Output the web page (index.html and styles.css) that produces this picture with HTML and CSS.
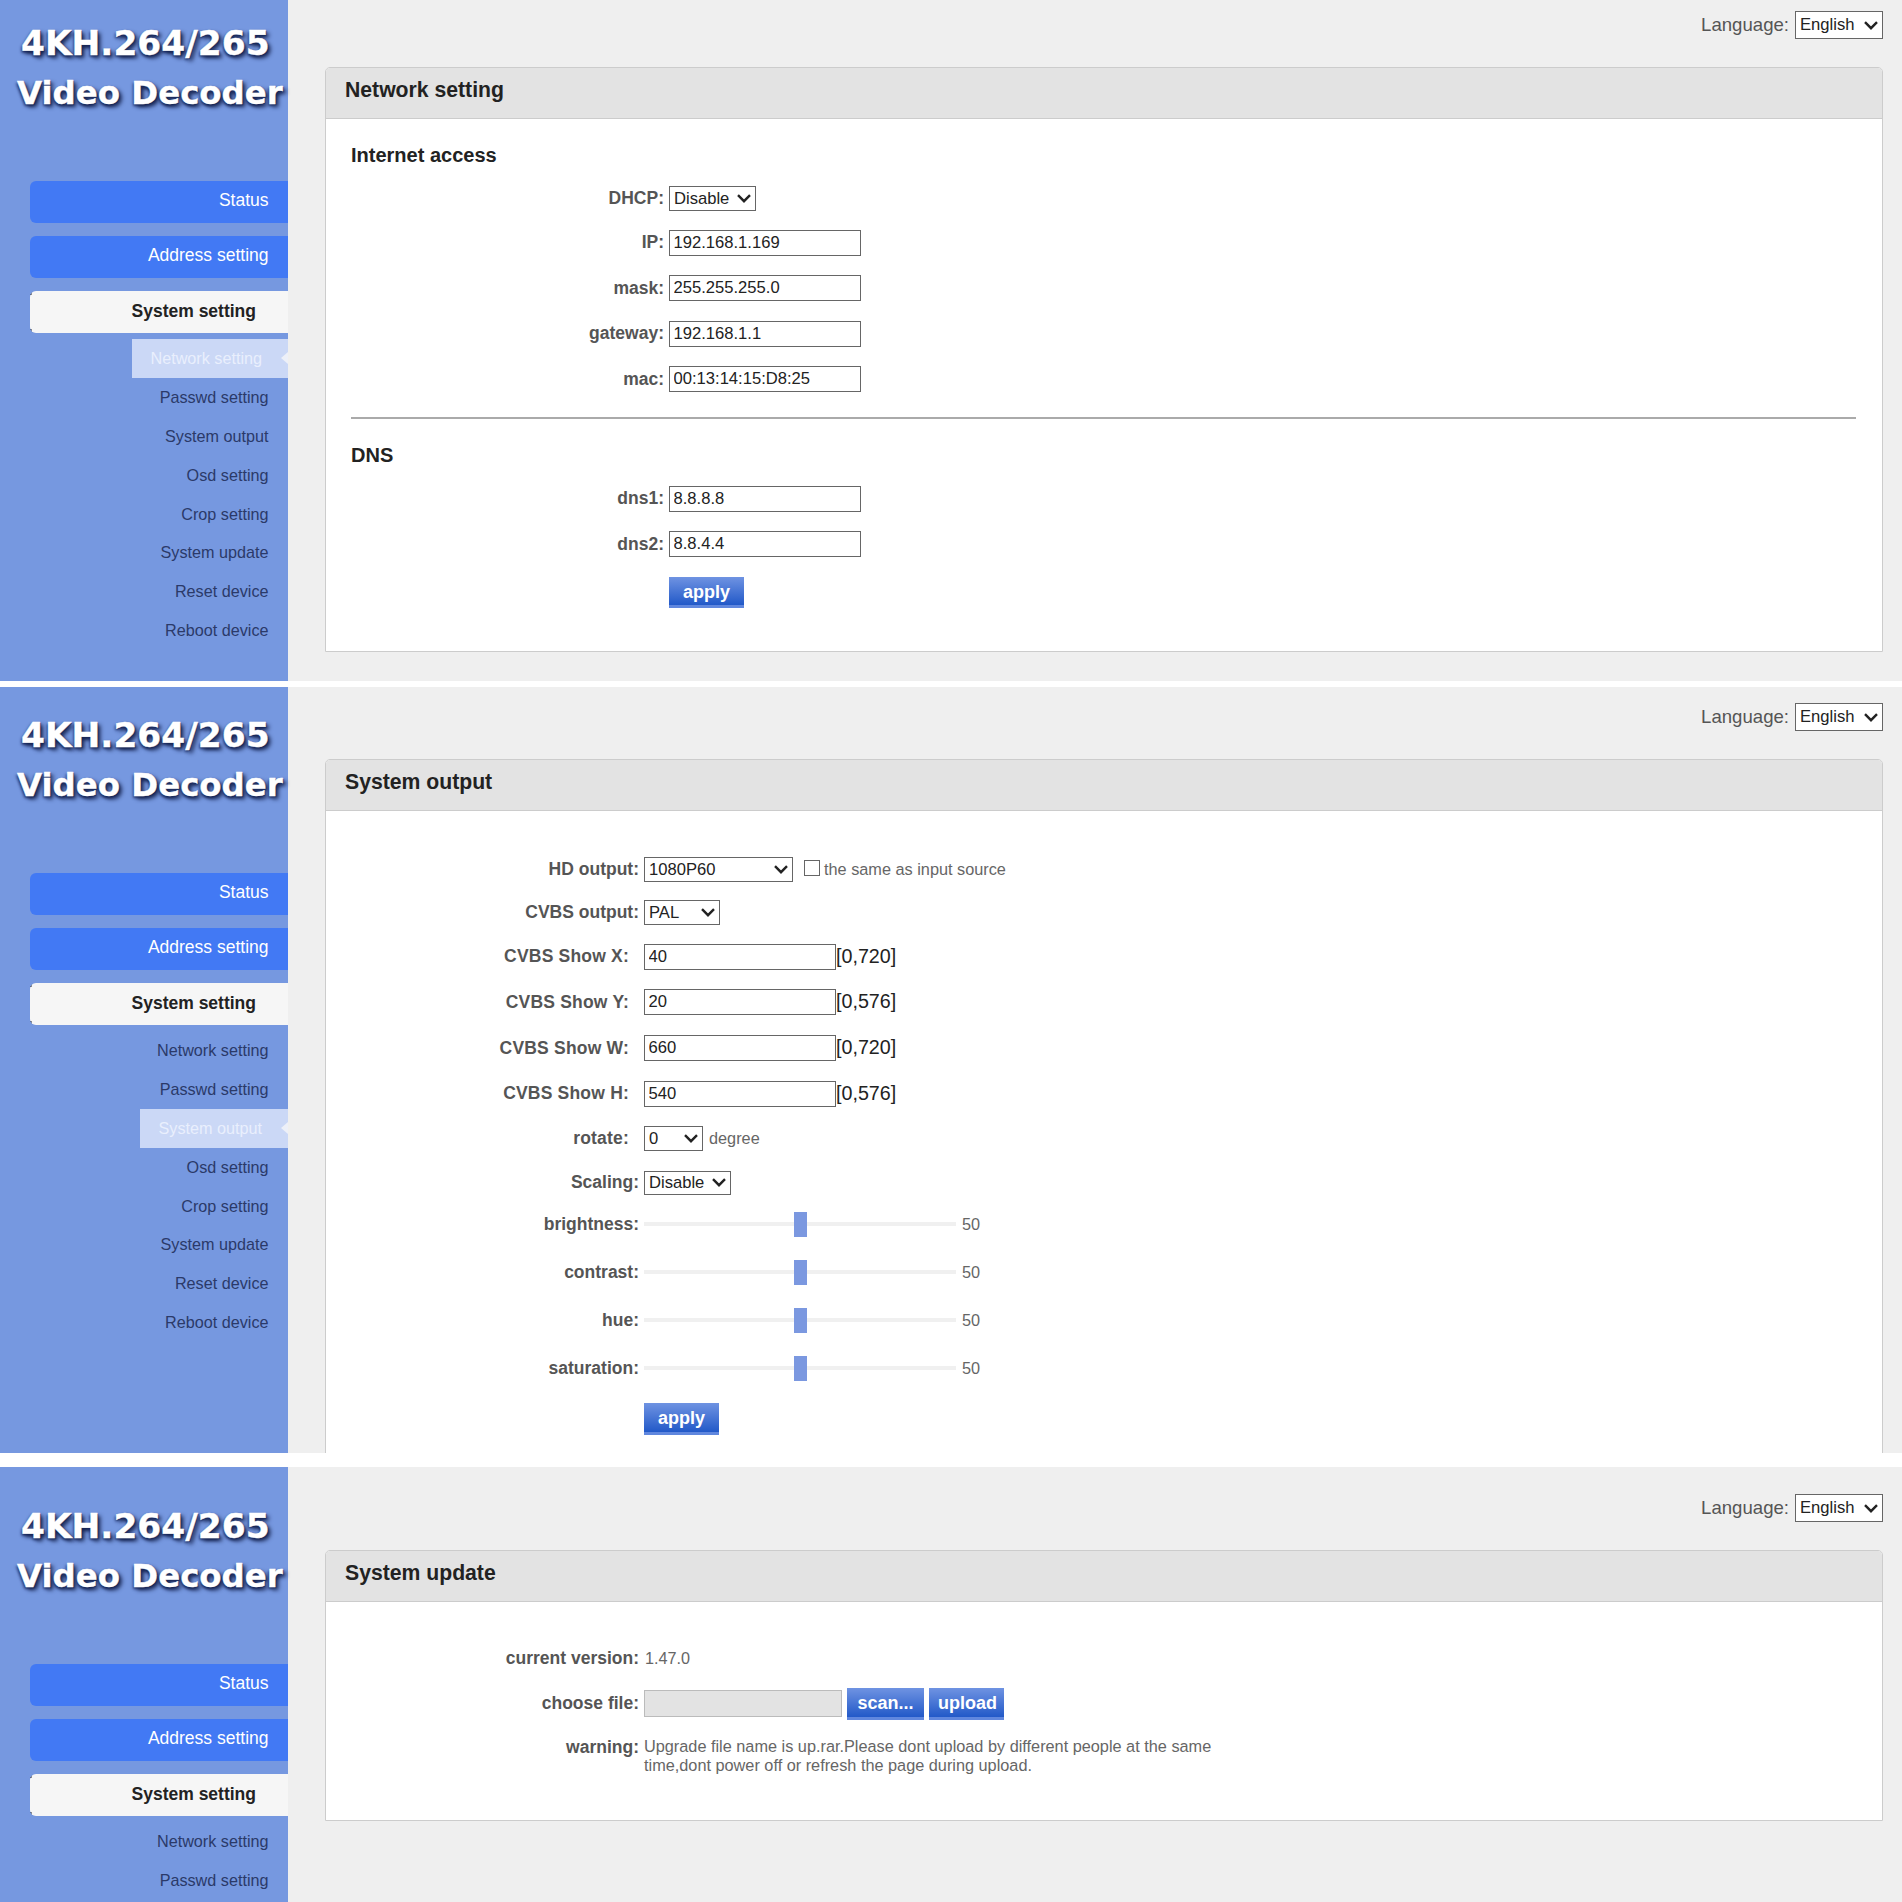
FILE: index.html
```html
<!DOCTYPE html>
<html lang="en">
<head>
<meta charset="utf-8">
<title>4KH.264/265 Video Decoder</title>
<link rel="stylesheet" href="styles.css">
</head>
<body>

<section class="screen screen-network">
  <aside class="sidebar">
    <div class="logo"><div class="logo-a">4KH.264/265</div><div class="logo-b">Video Decoder</div></div>
    <nav class="menu">
      <a class="menu-item">Status</a>
      <a class="menu-item">Address setting</a>
      <a class="menu-item menu-active">System setting</a>
    </nav>
    <ul class="sub">
      <li class="sub-item sub-active">Network setting</li>
      <li class="sub-item">Passwd setting</li>
      <li class="sub-item">System output</li>
      <li class="sub-item">Osd setting</li>
      <li class="sub-item">Crop setting</li>
      <li class="sub-item">System update</li>
      <li class="sub-item">Reset device</li>
      <li class="sub-item">Reboot device</li>
    </ul>
  </aside>
  <main class="main">
    <div class="lang"><span class="lang-label">Language:</span><select class="sel sel-lang"><option>English</option></select></div>
    <div class="panel">
      <h2 class="panel-title">Network setting</h2>
      <div class="panel-body body-net">
        <h3 class="group">Internet access</h3>
        <div class="row row-s wide"><label class="lbl">DHCP:</label><div class="control"><select class="sel sel-dhcp"><option>Disable</option></select></div></div>
        <div class="row row-n wide"><label class="lbl">IP:</label><div class="control"><input class="txt" value="192.168.1.169"></div></div>
        <div class="row row-n wide"><label class="lbl">mask:</label><div class="control"><input class="txt" value="255.255.255.0"></div></div>
        <div class="row row-n wide"><label class="lbl">gateway:</label><div class="control"><input class="txt" value="192.168.1.1"></div></div>
        <div class="row row-n wide"><label class="lbl">mac:</label><div class="control"><input class="txt" value="00:13:14:15:D8:25"></div></div>
        <hr class="rule">
        <h3 class="group group-dns">DNS</h3>
        <div class="row row-n wide"><label class="lbl">dns1:</label><div class="control"><input class="txt" value="8.8.8.8"></div></div>
        <div class="row row-n wide"><label class="lbl">dns2:</label><div class="control"><input class="txt" value="8.8.4.4"></div></div>
        <div class="row row-btn wide"><span class="lbl"></span><div class="control"><button class="btn">apply</button></div></div>
      </div>
    </div>
  </main>
</section>

<section class="screen screen-output">
  <aside class="sidebar">
    <div class="logo"><div class="logo-a">4KH.264/265</div><div class="logo-b">Video Decoder</div></div>
    <nav class="menu">
      <a class="menu-item">Status</a>
      <a class="menu-item">Address setting</a>
      <a class="menu-item menu-active">System setting</a>
    </nav>
    <ul class="sub">
      <li class="sub-item">Network setting</li>
      <li class="sub-item">Passwd setting</li>
      <li class="sub-item sub-active">System output</li>
      <li class="sub-item">Osd setting</li>
      <li class="sub-item">Crop setting</li>
      <li class="sub-item">System update</li>
      <li class="sub-item">Reset device</li>
      <li class="sub-item">Reboot device</li>
    </ul>
  </aside>
  <main class="main">
    <div class="lang"><span class="lang-label">Language:</span><select class="sel sel-lang"><option>English</option></select></div>
    <div class="panel">
      <h2 class="panel-title">System output</h2>
      <div class="panel-body body-out">
        <div class="row row-s"><label class="lbl">HD output:</label><div class="control"><select class="sel sel-hd"><option>1080P60</option></select><input type="checkbox" class="chk"><span class="note">the same as input source</span></div></div>
        <div class="row row-s"><label class="lbl">CVBS output:</label><div class="control"><select class="sel sel-cvbs"><option>PAL</option></select></div></div>
        <div class="row row-n"><label class="lbl lbl-show">CVBS Show X:</label><div class="control"><input class="txt" value="40"><span class="hint">[0,720]</span></div></div>
        <div class="row row-l"><label class="lbl lbl-show">CVBS Show Y:</label><div class="control"><input class="txt" value="20"><span class="hint">[0,576]</span></div></div>
        <div class="row row-l"><label class="lbl lbl-show">CVBS Show W:</label><div class="control"><input class="txt" value="660"><span class="hint">[0,720]</span></div></div>
        <div class="row row-n"><label class="lbl lbl-show">CVBS Show H:</label><div class="control"><input class="txt" value="540"><span class="hint">[0,576]</span></div></div>
        <div class="row row-n"><label class="lbl lbl-show">rotate:</label><div class="control"><select class="sel sel-rotate"><option>0</option></select><span class="note note-deg">degree</span></div></div>
        <div class="row row-s"><label class="lbl">Scaling:</label><div class="control"><select class="sel sel-dhcp sel-scaling"><option>Disable</option></select></div></div>
        <div class="sliders">
          <div class="row row-slider"><label class="lbl">brightness:</label><div class="control"><input type="range" class="slider" min="0" max="100" value="50"><span class="note note-val">50</span></div></div>
          <div class="row row-slider"><label class="lbl">contrast:</label><div class="control"><input type="range" class="slider" min="0" max="100" value="50"><span class="note note-val">50</span></div></div>
          <div class="row row-slider"><label class="lbl">hue:</label><div class="control"><input type="range" class="slider" min="0" max="100" value="50"><span class="note note-val">50</span></div></div>
          <div class="row row-slider"><label class="lbl">saturation:</label><div class="control"><input type="range" class="slider" min="0" max="100" value="50"><span class="note note-val">50</span></div></div>
        </div>
        <div class="row row-btn"><span class="lbl"></span><div class="control"><button class="btn">apply</button></div></div>
      </div>
    </div>
  </main>
</section>

<section class="screen screen-update">
  <aside class="sidebar">
    <div class="logo"><div class="logo-a">4KH.264/265</div><div class="logo-b">Video Decoder</div></div>
    <nav class="menu">
      <a class="menu-item">Status</a>
      <a class="menu-item">Address setting</a>
      <a class="menu-item menu-active">System setting</a>
    </nav>
    <ul class="sub">
      <li class="sub-item">Network setting</li>
      <li class="sub-item">Passwd setting</li>
    </ul>
  </aside>
  <main class="main">
    <div class="lang"><span class="lang-label">Language:</span><select class="sel sel-lang"><option>English</option></select></div>
    <div class="panel">
      <h2 class="panel-title">System update</h2>
      <div class="panel-body body-upd">
        <div class="row row-l"><label class="lbl">current version:</label><div class="control"><span class="note note-ver">1.47.0</span></div></div>
        <div class="row row-n"><label class="lbl">choose file:</label><div class="control"><input class="file-box" readonly><button class="btn btn-scan">scan...</button><button class="btn btn-upload">upload</button></div></div>
        <div class="row row-top"><label class="lbl">warning:</label><p class="warn">Upgrade file name is up.rar.Please dont upload by different people at the same time,dont power off or refresh the page during upload.</p></div>
      </div>
    </div>
  </main>
</section>

</body>
</html>
```
FILE: styles.css
```css
* { box-sizing: border-box; }
html, body { margin: 0; padding: 0; background: #fff; }
body { font-family: "Liberation Sans", Arial, sans-serif; color: #222; }

.screen { display: flex; overflow: hidden; background: #efefef; --offset: 0px; }
.screen-network { height: 681px; margin-bottom: 6px; }
.screen-output { height: 766px; margin-bottom: 14px; --offset: 5px; }
.screen-update { height: 435px; --offset: 16px; }

/* Sidebar */
.sidebar { width: 288px; flex: none; background: #7698e0; padding-top: var(--offset); }
.logo { height: 181px; padding-top: 20px; color: #fff; font-family: "DejaVu Sans", sans-serif; font-weight: 700; -webkit-text-stroke: .4px #fff; text-shadow: 3px 3px 4px #16234f, -1px 2px 3px #24366f, 1px 1px 1px #2a3f80; white-space: nowrap; }
.logo-a { font-size: 34.4px; line-height: 47px; padding-left: 21px; }
.logo-b { font-size: 32.4px; line-height: 53px; padding-left: 17px; }

.menu { display: flex; flex-direction: column; gap: 13.5px; margin-left: 30px; }
.menu-item { display: block; height: 41.5px; line-height: 38.5px; padding-right: 19.5px; text-align: right; font-size: 17.5px; color: #fff; background: #4279f4; border-radius: 6px 0 0 6px; }
.menu-active { padding-right: 32px; line-height: 40px; font-weight: 700; color: #222; background: linear-gradient(#222 0 4px, transparent 4px calc(100% - 4px), #222 calc(100% - 4px)) left / 1.5px 100% no-repeat, #f6f6f6; }

.sub { display: flex; flex-direction: column; align-items: flex-end; list-style: none; margin: 6.5px 0 0; padding: 0; }
.sub-item { height: 38.9px; line-height: 38.9px; padding-right: 19.5px; font-size: 16.2px; color: #2b3a69; white-space: nowrap; }
.sub-active { position: relative; padding: 0 26px 0 18.5px; color: #e9effd; background: #cbd8f6; }
.sub-active::after { content: ""; position: absolute; right: 0; top: 13px; border-style: solid; border-width: 6.5px 7px 6.5px 0; border-color: transparent #edf0f8 transparent transparent; }

/* Main */
.main { flex: 1; min-width: 0; padding: calc(11px + var(--offset)) 19px 0 37px; }
.lang { display: flex; justify-content: flex-end; align-items: center; gap: 6px; height: 28px; margin-bottom: 28px; }
.lang-label { font-size: 18.6px; color: #555; }

.panel { background: #fff; border: 1px solid #ccc; border-radius: 5px 5px 0 0; }
.panel-title { margin: 0; height: 51px; padding-left: 19px; line-height: 44px; font-size: 21.2px; font-weight: 700; color: #222; background: #e3e3e3; border-bottom: 1px solid #ccc; border-radius: 4px 4px 0 0; }
.panel-body { padding-left: 25px; padding-right: 26px; }
.body-net { padding-top: 20px; padding-bottom: 33px; }
.body-out { padding-top: 37px; padding-bottom: 40px; }
.body-upd { padding-top: 33px; padding-bottom: 45px; }

.group { margin: 0; height: 32px; line-height: 32px; font-size: 20px; font-weight: 700; color: #222; }
.group-dns { margin-top: 20px; margin-bottom: 5px; }
.body-net .group:first-child { margin-bottom: 6px; }
.rule { height: 2px; margin: 15px 0 0; border: 0; background: #aaa; }

/* Form rows */
.row { display: flex; align-items: center; gap: 5px; }
.row-s { height: 43px; }
.row-n { height: 45px; }
.row-l { height: 46px; }
.row-slider { height: 48px; }
.row-slider .lbl { margin-top: 1px; }
.row-btn { height: 53px; }
.row-top { align-items: flex-start; margin-top: 11px; }
.body-net .row-n { height: 45.5px; }
.body-net .row-btn { height: 51px; }
.sliders { margin-top: -4px; }

.lbl { flex: none; width: 288px; text-align: right; font-size: 17.5px; font-weight: 700; color: #555; white-space: nowrap; }
.wide .lbl { width: 313px; }
.lbl-show { padding-right: 10px; letter-spacing: .2px; }
.control { display: flex; align-items: center; }

.sel { height: 25px; padding: 0 0 1px 4px; appearance: none; background: #fff url("data:image/svg+xml,%3Csvg xmlns='http://www.w3.org/2000/svg' width='14' height='9' viewBox='0 0 14 9'%3E%3Cpath d='M1 1.2l6 6 6-6' fill='none' stroke='%23222' stroke-width='2.4'/%3E%3C/svg%3E") no-repeat right 4.5px center; border: 1px solid #666; border-radius: 0; font-family: inherit; font-size: 16.6px; color: #222; }
.sel-lang { width: 88px; height: 28px; }
.sel-dhcp { width: 87px; }
.sel-scaling { width: 87px; height: 24px; }
.sel-hd { width: 149px; }
.sel-cvbs { width: 76px; }
.sel-rotate { width: 59px; }

.txt { width: 192px; height: 26px; padding: 0 3.5px; background: #fff; border: 1px solid #666; border-radius: 0; font-family: inherit; font-size: 16.6px; color: #222; outline: 0; }
.hint { margin-top: -1px; font-size: 19.7px; color: #222; }
.chk { width: 16px; height: 16px; margin: -4px 0 0 11px; appearance: none; background: #fff; border: 1px solid #666; border-radius: 0; }
.note { margin-left: 4px; font-size: 16.3px; color: #666; white-space: nowrap; }
.note-deg { margin-left: 6px; }
.note-val { margin-left: 6px; margin-top: 1px; }
.note-ver { margin-left: 1px; font-size: 16.2px; }

.slider { width: 312px; height: 26px; margin: 0; padding: 0; appearance: none; background: transparent; }
.slider::-webkit-slider-runnable-track { height: 4px; background: #f0f0f0; }
.slider::-webkit-slider-thumb { width: 13px; height: 25px; margin-top: -10.5px; appearance: none; background: #7b98e0; border: 0; border-radius: 0; }

.btn { width: 75px; height: 32px; padding: 0 0 1px; border: 0; border-radius: 0; font-family: inherit; font-size: 18px; font-weight: 700; color: #fff; background: linear-gradient(#6f93e2, #2259c8 calc(100% - 3px), #6087de calc(100% - 3px)); }
.body-net .btn { height: 31px; }
.btn-scan { width: 77px; margin-left: 5px; }
.btn-upload { width: 75px; margin-left: 5px; padding-left: 2px; }
.file-box { width: 198px; height: 27px; padding: 0; background: #e3e3e3; border: 1px solid #bbb; border-radius: 0; outline: 0; }

.warn { width: 580px; margin: 0; font-size: 16.3px; line-height: 19px; color: #666; }
```
